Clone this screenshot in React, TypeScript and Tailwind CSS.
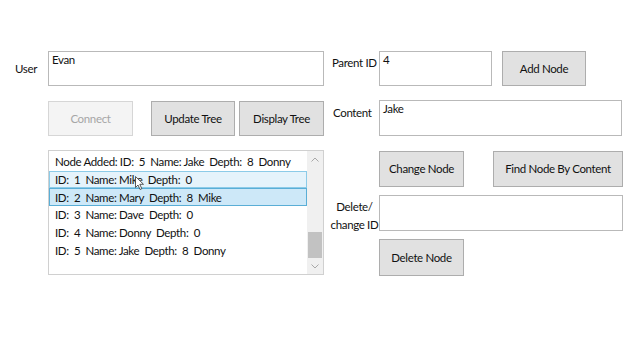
import React from "react";

const font = { fontFamily: '"Segoe UI", Lato, "Noto Sans", sans-serif' };

function Btn({ w, h, children, disabled }: { w: string; h: string; children: React.ReactNode; disabled?: boolean }) {
  return (
    <div
      className={
        (disabled
          ? "bg-[#f4f4f4] border-[#d6d6d6] text-[#a6a6a6] "
          : "bg-[#e1e1e1] border-[#adadad] text-[#111] ") +
        `flex shrink-0 items-center justify-center whitespace-nowrap border ${w} ${h}`
      }
    >
      {children}
    </div>
  );
}

function Box({ w, h, text }: { w: string; h: string; text?: string }) {
  return (
    <div className={`shrink-0 border border-[#b9b9b9] bg-white pl-[3px] pt-[0px] leading-[15px] text-[#111] ${w} ${h}`}>
      {text}
    </div>
  );
}

const rows = [
  "Node Added: ID:  5  Name: Jake  Depth:  8  Donny",
  "ID:  1  Name: Mike  Depth:  0",
  "ID:  2  Name: Mary  Depth:  8  Mike",
  "ID:  3  Name: Dave  Depth:  0",
  "ID:  4  Name: Donny  Depth:  0",
  "ID:  5  Name: Jake  Depth:  8  Donny",
];

export default function App() {
  return (
    <div className="relative flex h-[360px] w-[640px] bg-white text-[#111] text-[11.5px] tracking-[-0.35px]" style={font}>
      {/* left column */}
      <div className="flex w-[324px] shrink-0 flex-col pl-[15px] pt-[51px]">
        <div className="flex h-[35px] items-center">
          <div className="w-[33px] shrink-0">User</div>
          <Box w="w-[276px]" h="h-[35px]" text="Evan" />
        </div>
        <div className="mt-[15px] flex h-[35px] pl-[33px]">
          <Btn w="w-[85px]" h="h-[35px]" disabled>Connect</Btn>
          <div className="ml-[18px]">
            <Btn w="w-[84px]" h="h-[35px]">Update Tree</Btn>
          </div>
          <div className="ml-[4px]">
            <Btn w="w-[85px]" h="h-[35px]">Display Tree</Btn>
          </div>
        </div>
        <div className="ml-[33px] mt-[14px] flex h-[125px] w-[276px] overflow-hidden border border-[#d0d0d0] bg-white">
          <div className="flex min-w-0 flex-1 flex-col pt-[2px]">
            {rows.map((r, i) => (
              <div
                key={i}
                className={
                  (i === 1
                    ? "border border-[#8ccbe8] bg-[#e5f3fb] "
                    : i === 2
                    ? "border border-[#5aaed6] bg-[#cde8f8] "
                    : "border border-transparent ") +
                  "flex h-[17.7px] items-center whitespace-pre pl-[5px]"
                }
              >
                {r}
              </div>
            ))}
          </div>
          <div className="flex w-[16px] shrink-0 flex-col bg-[#f0f0f0]">
            <div className="flex h-[17px] items-center justify-center">
              <svg width="8" height="5" viewBox="0 0 8 5">
                <path d="M0.5 4.5 L4 1 L7.5 4.5" fill="none" stroke="#a8a8a8" strokeWidth="1" />
              </svg>
            </div>
            <div className="flex-1" />
            <div className="mx-[1px] h-[26px] bg-[#c2c2c2]" />
            <div className="flex h-[16px] items-center justify-center">
              <svg width="8" height="5" viewBox="0 0 8 5">
                <path d="M0.5 0.5 L4 4 L7.5 0.5" fill="none" stroke="#a8a8a8" strokeWidth="1" />
              </svg>
            </div>
          </div>
        </div>
      </div>

      {/* right column */}
      <div className="ml-[6px] flex flex-col pt-[51px]">
        <div className="flex h-[35px]">
          <div className="w-[49px] shrink-0 whitespace-nowrap pl-[2px] pt-[4px] leading-[15px]">Parent ID</div>
          <Box w="w-[113px]" h="h-[35px]" text="4" />
          <div className="ml-[10px]">
            <Btn w="w-[84px]" h="h-[35px]">Add Node</Btn>
          </div>
        </div>
        <div className="mt-[14px] flex h-[36px]">
          <div className="w-[49px] shrink-0 pl-[3px] pt-[5px] leading-[15px]">Content</div>
          <Box w="w-[243px]" h="h-[36px]" text="Jake" />
        </div>
        <div className="mt-[15px] flex h-[36px] pl-[49px]">
          <Btn w="w-[85px]" h="h-[36px]">Change Node</Btn>
          <div className="ml-[29px]">
            <Btn w="w-[130px]" h="h-[36px]">Find Node By Content</Btn>
          </div>
        </div>
        <div className="mt-[8px] flex h-[36px]">
          <div className="w-[49px] shrink-0 whitespace-nowrap pt-[3px] text-center leading-[18px]">
            Delete/
            <br />
            change ID
          </div>
          <Box w="w-[244px]" h="h-[36px]" />
        </div>
        <div className="mt-[8px] flex h-[37px] pl-[49px]">
          <Btn w="w-[85px]" h="h-[37px]">Delete Node</Btn>
        </div>
      </div>

      {/* mouse cursor */}
      <svg className="absolute left-[135px] top-[176px]" width="10" height="15" viewBox="0 0 10 15">
        <path d="M0.5 0.5 L0.5 11.5 L3 9 L5 13.5 L6.8 12.7 L4.8 8.3 L8.5 8.3 Z" fill="#ffffff" stroke="#333" strokeWidth="0.8" />
      </svg>
    </div>
  );
}
